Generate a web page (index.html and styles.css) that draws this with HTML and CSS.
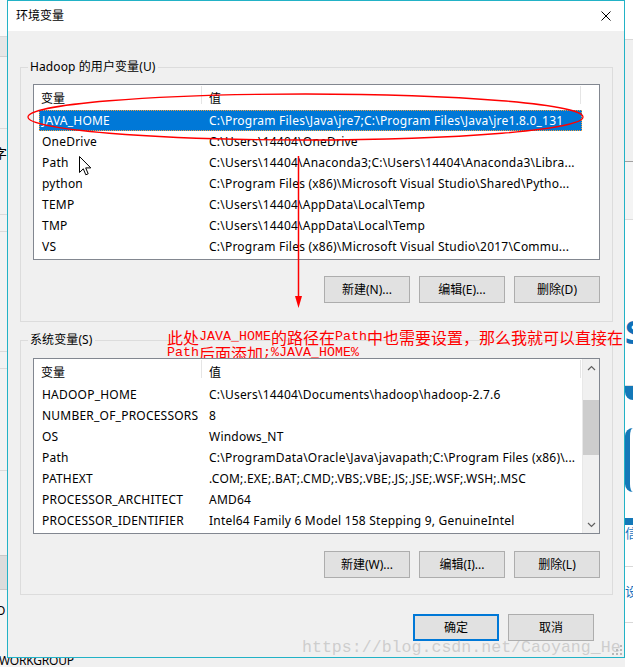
FILE: index.html
```html
<!DOCTYPE html>
<html lang="zh-CN">
<head>
<meta charset="utf-8">
<title>环境变量</title>
<link rel="stylesheet" href="styles.css">
</head>
<body>
<div class="strip-left">
  <div class="seg l1"></div>
  <div class="seg l2"></div>
  <div class="seg l3"></div>
  <div class="seg l4"><span class="cut">字</span></div>
  <div class="seg l5"></div>
  <div class="seg l6"></div>
  <div class="seg l7"></div>
  <div class="seg l8"></div>
  <div class="seg l9"></div>
  <div class="seg l10"></div>
  <div class="seg l11"><span class="cut o">O</span></div>
</div>
<div class="workgroup">WORKGROUP</div>

<div class="strip-right">
  <div class="seg r1"></div>
  <div class="seg r2"></div>
  <div class="seg r3"></div>
  <div class="seg r4"></div>
  <div class="seg r5"><span class="bigs">S</span></div>
  <div class="seg r6"></div>
  <div class="seg r7"></div>
  <div class="seg r8"></div>
  <div class="seg r9"></div>
  <div class="seg r10"></div>
  <div class="seg r11"><span class="rtxt">信</span></div>
  <div class="seg r12"></div>
  <div class="seg r13"><span class="rtxt">设</span></div>
  <div class="seg r14"></div>
</div>

<div class="dialog">
  <div class="titlebar">
    <span class="title">环境变量</span>
    <svg class="close" width="10" height="10" viewBox="0 0 10 10"><path d="M0.5 0.5L9.5 9.5M9.5 0.5L0.5 9.5" stroke="#000" stroke-width="1" fill="none"/></svg>
  </div>
  <div class="client">
    <div class="group g1">
      <div class="legend">Hadoop 的用户变量(U)</div>
      <div class="listbox">
        <div class="lv">
          <div class="lhead"><div class="hc c1">变量</div><div class="hc c2">值</div></div>
          <div class="row sel"><div class="cell c1">JAVA_HOME</div><div class="cell c2">C:\Program Files\Java\jre7;C:\Program Files\Java\jre1.8.0_131</div></div>
          <div class="row"><div class="cell c1">OneDrive</div><div class="cell c2">C:\Users\14404\OneDrive</div></div>
          <div class="row"><div class="cell c1">Path</div><div class="cell c2">C:\Users\14404\Anaconda3;C:\Users\14404\Anaconda3\Libra...</div></div>
          <div class="row"><div class="cell c1">python</div><div class="cell c2">C:\Program Files (x86)\Microsoft Visual Studio\Shared\Pytho...</div></div>
          <div class="row"><div class="cell c1">TEMP</div><div class="cell c2">C:\Users\14404\AppData\Local\Temp</div></div>
          <div class="row"><div class="cell c1">TMP</div><div class="cell c2">C:\Users\14404\AppData\Local\Temp</div></div>
          <div class="row"><div class="cell c1">VS</div><div class="cell c2">C:\Program Files (x86)\Microsoft Visual Studio\2017\Commu...</div></div>
        </div>
      </div>
      <div class="btns">
        <div class="btn">新建(N)...</div>
        <div class="btn">编辑(E)...</div>
        <div class="btn">删除(D)</div>
      </div>
    </div>

    <div class="group g2">
      <div class="legend">系统变量(S)</div>
      <div class="listbox">
        <div class="lv">
          <div class="lhead"><div class="hc c1">变量</div><div class="hc c2">值</div></div>
          <div class="row"><div class="cell c1">HADOOP_HOME</div><div class="cell c2">C:\Users\14404\Documents\hadoop\hadoop-2.7.6</div></div>
          <div class="row"><div class="cell c1">NUMBER_OF_PROCESSORS</div><div class="cell c2">8</div></div>
          <div class="row"><div class="cell c1">OS</div><div class="cell c2">Windows_NT</div></div>
          <div class="row"><div class="cell c1">Path</div><div class="cell c2">C:\ProgramData\Oracle\Java\javapath;C:\Program Files (x86)\...</div></div>
          <div class="row"><div class="cell c1">PATHEXT</div><div class="cell c2">.COM;.EXE;.BAT;.CMD;.VBS;.VBE;.JS;.JSE;.WSF;.WSH;.MSC</div></div>
          <div class="row"><div class="cell c1">PROCESSOR_ARCHITECT</div><div class="cell c2">AMD64</div></div>
          <div class="row"><div class="cell c1">PROCESSOR_IDENTIFIER</div><div class="cell c2">Intel64 Family 6 Model 158 Stepping 9, GenuineIntel</div></div>
        </div>
        <div class="vscroll">
          <div class="sb-arrow"><svg width="9" height="6" viewBox="0 0 9 6"><path d="M1 5L4.5 1.5L8 5" stroke="#606060" stroke-width="1.2" fill="none"/></svg></div>
          <div class="sb-track"><div class="sb-thumb"></div></div>
          <div class="sb-arrow"><svg width="9" height="6" viewBox="0 0 9 6"><path d="M1 1L4.5 4.5L8 1" stroke="#606060" stroke-width="1.2" fill="none"/></svg></div>
        </div>
      </div>
      <div class="btns">
        <div class="btn">新建(W)...</div>
        <div class="btn">编辑(I)...</div>
        <div class="btn">删除(L)</div>
      </div>
    </div>

    <div class="footer">
      <div class="btn primary">确定</div>
      <div class="btn">取消</div>
    </div>
  </div>
</div>

<div class="note">
  <div class="nline">此处<span class="mono">JAVA_HOME</span>的路径在<span class="mono">Path</span>中也需要设置，那么我就可以直接在</div>
  <div class="nline"><span class="mono">Path</span>后面添加<span class="mono">;%JAVA_HOME%</span></div>
</div>

<svg class="marks" width="633" height="667" viewBox="0 0 633 667">
  <ellipse cx="305.5" cy="117" rx="277.5" ry="23" fill="none" stroke="#ff0000" stroke-width="1.3"/>
  <line x1="298.5" y1="156" x2="298.5" y2="298" stroke="#ff0000" stroke-width="1.5"/>
  <polygon points="295,296 302,296 298.5,308" fill="#ff0000"/>
</svg>

<svg class="cursor" width="13" height="21" viewBox="0 0 13 21">
  <path d="M0.5 0.5L0.5 16.5L4.3 12.8L6.8 18.8L9.2 17.8L6.7 11.9L11.8 11.9Z" fill="#fff" stroke="#000" stroke-width="1" stroke-linejoin="miter"/>
</svg>

<div class="watermark">https://blog.csdn.net/Caoyang_He</div>

<svg class="grip" width="11" height="11" viewBox="0 0 11 11">
  <rect x="8" y="0" width="2" height="2" fill="#b8b8b8"/>
  <rect x="4" y="4" width="2" height="2" fill="#b8b8b8"/>
  <rect x="8" y="4" width="2" height="2" fill="#b8b8b8"/>
  <rect x="0" y="8" width="2" height="2" fill="#b8b8b8"/>
  <rect x="4" y="8" width="2" height="2" fill="#b8b8b8"/>
  <rect x="8" y="8" width="2" height="2" fill="#b8b8b8"/>
</svg>
</body>
</html>
```

FILE: styles.css
```css
* { box-sizing: border-box; }

body {
  margin: 0;
  width: 633px;
  height: 667px;
  overflow: hidden;
  position: relative;
  background: #f0f0f0;
  font-family: "Noto Sans", "Noto Sans CJK SC", sans-serif;
  font-size: 12px;
  color: #000;
}

/* ---------- background desktop fragments ---------- */
.strip-left {
  position: absolute;
  left: 0;
  top: 0;
  width: 7px;
  height: 667px;
  display: flex;
  flex-direction: column;
  overflow: hidden;
  background: #f0f0f0;
}
.strip-right {
  position: absolute;
  left: 625px;
  top: 0;
  width: 8px;
  height: 667px;
  display: flex;
  flex-direction: column;
  overflow: hidden;
  background: #ffffff;
}
.seg { flex: none; overflow: hidden; position: relative; }
.l1 { height: 37px; background: #fafafa; border-bottom: 1px solid #d9d9d9; }
.l2 { height: 20px; background: #e6e6e6; border-bottom: 1px solid #d0d0d0; }
.l3 { height: 72px; background: #f2f2f2; border-bottom: 1px solid #dadada; }
.l4 { height: 86px; background: #f2f2f2; border-bottom: 1px solid #dadada; padding-top: 16px; }
.l5 { height: 17px; background: #f2f2f2; border-bottom: 1px solid #dadada; }
.l6 { height: 120px; background: #f2f2f2; border-bottom: 1px solid #dadada; }
.l7 { height: 17px; background: #f2f2f2; border-bottom: 1px solid #dadada; }
.l8 { height: 102px; background: #f2f2f2; border-bottom: 1px solid #dadada; }
.l9 { height: 85px; background: #f2f2f2; border-bottom: 1px solid #c8c8c8; }
.l10 { height: 34px; background: #dcdcdc; border-bottom: 1px solid #c8c8c8; }
.l11 { height: 77px; background: #f4f4f4; padding-top: 13px; }
.cut {
  display: block;
  margin-left: -6px;
  font-size: 13px;
  line-height: 16px;
  color: #000;
  white-space: nowrap;
}
.cut.o { margin-left: -4px; font-size: 12px; }

.workgroup {
  position: absolute;
  left: -1px;
  top: 653px;
  line-height: 16px;
  font-size: 12px;
  letter-spacing: -0.2px;
}

.r1 { height: 40px; background: #ffffff; border-bottom: 1px solid #d8d8d8; }
.r2 { height: 122px; background: #f0f0f0; border-bottom: 1px solid #a0a0a0; }
.r3 { height: 58px; background: #f4f4f4; border-bottom: 1px solid #dcdcdc; }
.r4 { height: 96px; background: #ffffff; }
.r5 { height: 34px; background: #ffffff; }
.bigs {
  display: block;
  margin-left: 0;
  font-family: "Noto Sans", sans-serif;
  font-weight: 700;
  font-size: 32px;
  line-height: 32px;
  color: #1070b8;
}
.r6 { height: 36px; background: #ffffff; border-bottom: 1px solid #e0e0e0; }
.r7 { height: 14px; background: #1478b8; border-radius: 0 0 0 8px; }
.r8 { height: 28px; background: #ffffff; }
.r9 { height: 64px; background: #ffffff; border-left: 5px solid #1478b8; border-radius: 40px 0 0 40px; }
.r10 { height: 33px; background: #ffffff; border-bottom: 7px solid #1478b8; }
.r11 { height: 42px; background: #ffffff; border-bottom: 1px solid #d8d8d8; }
.rtxt {
  display: block;
  margin-left: 0;
  font-size: 13px;
  line-height: 16px;
  color: #1a73c0;
}
.r12 { height: 16px; background: #ffffff; }
.r13 { height: 40px; background: #ffffff; border-bottom: 1px solid #d8d8d8; }
.r14 { height: 40px; background: #ffffff; }

/* ---------- dialog ---------- */
.dialog {
  position: absolute;
  left: 7px;
  top: 0;
  width: 618px;
  height: 658px;
  border: 1px solid #22b2c6;
  background: #f0f0f0;
  display: flex;
  flex-direction: column;
}
.titlebar {
  height: 30px;
  flex: none;
  background: #ffffff;
  display: flex;
  align-items: center;
  justify-content: space-between;
  padding: 0 13px 0 8px;
}
.title { font-size: 12px; line-height: 16px; }
.close { display: block; margin-top: -1px; }

.client {
  flex: 1;
  padding-top: 36px;
}

.group {
  margin: 0 11px 0 12px;
  border: 1px solid #dcdcdc;
  padding: 0 12px 18px;
}
.g2 { margin-top: 18px; padding-bottom: 16px; }

.legend {
  width: max-content;
  height: 16px;
  line-height: 16px;
  margin: -9px 0 0 -5px;
  padding: 0 2px;
  background: #f0f0f0;
  letter-spacing: 0.1px;
}

.listbox {
  position: relative;
  z-index: 2;
  height: 176px;
  margin-top: 9px;
  border: 1px solid #828790;
  background: #ffffff;
  display: flex;
}
.g2 .listbox { margin-top: 10px; }

.lv { flex: 1; min-width: 0; overflow: hidden; }

.lhead {
  height: 25px;
  display: flex;
}
.hc {
  height: 25px;
  display: flex;
  align-items: center;
  background: linear-gradient(#e5e5e5, #e5e5e5) right 1px top 1px / 1px 18px no-repeat;
}
.lhead .c1 { width: 169px; padding-left: 7px; }
.lhead .c2 { width: 379px; padding-left: 6px; }

.row {
  height: 21px;
  width: 543px;
  margin-left: 5px;
  display: flex;
  align-items: center;
  white-space: nowrap;
}
.cell {
  overflow: hidden;
  white-space: nowrap;
  line-height: 16px;
  letter-spacing: 0.22px;
}
.row .c1 { width: 163px; padding-left: 3px; }
.row .c2 { flex: 1; padding-left: 7px; }
.row.sel {
  background: #0078d7;
  color: #ffffff;
  outline: 1px dotted #f0a040;
  outline-offset: -1px;
}

.vscroll {
  width: 17px;
  flex: none;
  background: #f0f0f0;
  display: flex;
  flex-direction: column;
  border-left: 1px solid #e8e8e8;
}
.sb-arrow {
  height: 17px;
  display: flex;
  align-items: center;
  justify-content: center;
}
.sb-arrow svg { display: block; }
.sb-track { flex: 1; padding-top: 24px; }
.sb-thumb { height: 55px; background: #cdcdcd; }

.btns {
  display: flex;
  justify-content: flex-end;
  gap: 9px;
  margin-top: 16px;
}
.g2 .btns { margin-top: 17px; }

.btn {
  width: 86px;
  height: 27px;
  border: 1px solid #adadad;
  background: #e1e1e1;
  display: flex;
  align-items: center;
  justify-content: center;
  line-height: 16px;
}
.btn.primary { border: 2px solid #0078d7; }

.footer {
  display: flex;
  justify-content: flex-end;
  gap: 9px;
  margin-top: 19px;
  padding-right: 30px;
}

/* ---------- annotations ---------- */
.note {
  position: absolute;
  z-index: 1;
  left: 167px;
  top: 329px;
  color: #ff0000;
  font-family: "Noto Sans CJK SC", sans-serif;
  font-size: 16px;
  white-space: nowrap;
}
.nline {
  height: 16px;
  line-height: 16px;
  display: flex;
  align-items: center;
}
.mono {
  font-family: "Liberation Mono", monospace;
  font-size: 13.33px;
  line-height: 16px;
}

.marks {
  position: absolute;
  left: 0;
  top: 0;
  z-index: 5;
  pointer-events: none;
}

.cursor {
  position: absolute;
  left: 79px;
  top: 156px;
  z-index: 6;
}

.watermark {
  position: absolute;
  z-index: 7;
  left: 302px;
  top: 638px;
  font-family: "Liberation Mono", monospace;
  font-size: 16.6px;
  line-height: 20px;
  color: rgba(170, 170, 170, 0.5);
  white-space: nowrap;
}

.grip {
  position: absolute;
  z-index: 7;
  left: 612px;
  top: 645px;
}
```
